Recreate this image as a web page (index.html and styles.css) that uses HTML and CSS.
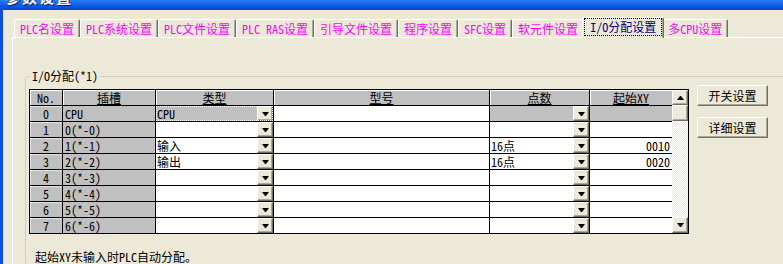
FILE: index.html
```html
<!DOCTYPE html>
<html lang="zh-CN">
<head>
    <meta charset="UTF-8">
    <title>参数设置</title>
    <link rel="stylesheet" href="styles.css">
</head>
<body>
    <div class="titlebar"><span class="title">参数设置</span></div>
    <div class="window">
        <div class="tabs">
            <div class="tab">PLC名设置</div>
            <div class="tab">PLC系统设置</div>
            <div class="tab">PLC文件设置</div>
            <div class="tab">PLC RAS设置</div>
            <div class="tab">引导文件设置</div>
            <div class="tab">程序设置</div>
            <div class="tab">SFC设置</div>
            <div class="tab">软元件设置</div>
            <div class="tab active"><span class="focus">I/O分配设置</span></div>
            <div class="tab">多CPU设置</div>
        </div>

        <div class="panel">
            <fieldset class="group">
                <legend>I/O分配(*1)</legend>
                <div class="io-row">
                    <div class="table-box">
                        <div class="grid">
                            <!-- header -->
                            <div class="c hd plain">No.</div>
                            <div class="c hd">插槽</div>
                            <div class="c hd">类型</div>
                            <div class="c hd">型号</div>
                            <div class="c hd">点数</div>
                            <div class="c hd">起始XY</div>

                            <div class="c no">0</div>
                            <div class="c slot">CPU</div>
                            <div class="c combo gray sel"><span>CPU</span><i class="drop"></i></div>
                            <div class="c"></div>
                            <div class="c combo gray"><span></span><i class="drop"></i></div>
                            <div class="c gray"></div>

                            <div class="c no">1</div>
                            <div class="c slot">0(*-0)</div>
                            <div class="c combo"><span></span><i class="drop"></i></div>
                            <div class="c"></div>
                            <div class="c combo"><span></span><i class="drop"></i></div>
                            <div class="c num"></div>

                            <div class="c no">2</div>
                            <div class="c slot">1(*-1)</div>
                            <div class="c combo"><span>输入</span><i class="drop"></i></div>
                            <div class="c"></div>
                            <div class="c combo"><span>16点</span><i class="drop"></i></div>
                            <div class="c num">0010</div>

                            <div class="c no">3</div>
                            <div class="c slot">2(*-2)</div>
                            <div class="c combo"><span>输出</span><i class="drop"></i></div>
                            <div class="c"></div>
                            <div class="c combo"><span>16点</span><i class="drop"></i></div>
                            <div class="c num">0020</div>

                            <div class="c no">4</div>
                            <div class="c slot">3(*-3)</div>
                            <div class="c combo"><span></span><i class="drop"></i></div>
                            <div class="c"></div>
                            <div class="c combo"><span></span><i class="drop"></i></div>
                            <div class="c num"></div>

                            <div class="c no">5</div>
                            <div class="c slot">4(*-4)</div>
                            <div class="c combo"><span></span><i class="drop"></i></div>
                            <div class="c"></div>
                            <div class="c combo"><span></span><i class="drop"></i></div>
                            <div class="c num"></div>

                            <div class="c no">6</div>
                            <div class="c slot">5(*-5)</div>
                            <div class="c combo"><span></span><i class="drop"></i></div>
                            <div class="c"></div>
                            <div class="c combo"><span></span><i class="drop"></i></div>
                            <div class="c num"></div>

                            <div class="c no">7</div>
                            <div class="c slot">6(*-6)</div>
                            <div class="c combo"><span></span><i class="drop"></i></div>
                            <div class="c"></div>
                            <div class="c combo"><span></span><i class="drop"></i></div>
                            <div class="c num"></div>
                        </div>
                        <div class="vscroll">
                            <div class="sb up"></div>
                            <div class="sb thumb"></div>
                            <div class="sb-track"></div>
                            <div class="sb down"></div>
                        </div>
                    </div>
                    <div class="side">
                        <button class="btn">开关设置</button>
                        <button class="btn">详细设置</button>
                    </div>
                </div>
                <p class="note">起始XY未输入时PLC自动分配。</p>
            </fieldset>
        </div>
    </div>
</body>
</html>
```

FILE: styles.css
```css
body {
    margin: 0;
    width: 783px;
    height: 264px;
    overflow: hidden;
    background: #ece9d8;
    color: #000;
    font-family: "Noto Sans Mono CJK SC", "Noto Sans CJK SC", "Liberation Mono", monospace;
    font-size: 12px;
}
.titlebar {
    height: 10px;
    overflow: hidden;
    padding-left: 5px;
    background: linear-gradient(#2a7bf6, #0c58e6 60%, #0848d4);
}
.title {
    display: block;
    margin-top: -11px;
    color: #fff;
    font: bold 15px/15px "Noto Sans CJK SC", sans-serif;
    letter-spacing: 2px;
    text-shadow: 1px 1px #0a1e6e;
}
.window {
    height: 254px;
    display: flex;
    flex-direction: column;
    border-left: 3px solid #0a50dc;
    padding-left: 9px;
}
.tabs {
    height: 27px;
    flex: none;
    display: flex;
    align-items: flex-end;
    padding-left: 2px;
}
.tab {
    height: 18px;
    box-sizing: border-box;
    padding: 0 5px;
    border-top: 1px solid #fff;
    border-left: 1px solid #fff;
    border-right: 1px solid #716f64;
    border-radius: 2px 2px 0 0;
    box-shadow: inset -1px 0 #aca899;
    color: #f0f;
    line-height: 17px;
    white-space: nowrap;
}
.tab.active {
    position: relative;
    height: 21px;
    margin: 0 -2px -1px;
    padding: 0 1px;
    background: #ece9d8;
    color: #000080;
}
.focus {
    display: block;
    border: 1px dotted #000;
    padding: 0 5px;
    line-height: 16px;
}
.panel {
    flex: 1;
    border-top: 1px solid #fff;
    border-left: 1px solid #fff;
    padding-left: 12px;
}
.group {
    width: 780px;
    min-width: 0;
    margin: 31px 0 0;
    padding: 2px 0 0 3px;
    border: 1px solid #d0d0bf;
    border-radius: 3px;
}
.group legend {
    margin-left: 1px;
    padding: 0 2px;
    line-height: 14px;
}
.io-row {
    display: flex;
    align-items: flex-start;
}
.table-box {
    margin-top: 4px;
    display: flex;
    border: 1px solid #000;
}
.grid {
    display: grid;
    grid-template-columns: 32px 92px 117px 215px 99px 82px;
    grid-auto-rows: 15px;
    gap: 1px;
    background: #000;
}
.c {
    background: #fff;
    line-height: 15px;
    white-space: nowrap;
    overflow: hidden;
}
.hd {
    background: #c0c0c0;
    text-align: center;
    text-decoration: underline;
    box-shadow: inset 1px 1px #fff;
}
.hd.plain {
    text-decoration: none;
}
.no {
    background: #c0c0c0;
    text-align: center;
    box-shadow: inset 1px 1px #e4e4e4;
}
.slot {
    background: #c0c0c0;
    padding-left: 2px;
}
.gray {
    background: #c0c0c0;
}
.num {
    text-align: right;
    padding-right: 2px;
}
.combo {
    display: flex;
}
.combo span {
    flex: 1;
    padding-left: 1px;
}
.sel {
    outline: 1px dotted #fff;
    outline-offset: -1px;
}
.drop, .sb {
    flex: none;
    width: 16px;
    height: 15px;
    box-sizing: border-box;
    display: flex;
    align-items: center;
    justify-content: center;
    background: #ece9d8;
    border: 1px solid;
    border-color: #fff #716f64 #716f64 #fff;
    box-shadow: inset -1px -1px #aca899;
}
.drop::after, .sb.down::after {
    content: "";
    width: 1px;
    border-top: 4px solid #000;
    border-left: 3px solid transparent;
    border-right: 3px solid transparent;
}
.sb.up::after {
    content: "";
    width: 1px;
    border-bottom: 4px solid #000;
    border-left: 3px solid transparent;
    border-right: 3px solid transparent;
}
.vscroll {
    width: 16px;
    display: flex;
    flex-direction: column;
    background-color: #fff;
    background-image: conic-gradient(#ece9d8 25%, #fff 0 50%, #ece9d8 0 75%, #fff 0);
    background-size: 2px 2px;
}
.sb.thumb, .sb.down {
    height: 16px;
}
.sb-track {
    flex: 1;
}
.side {
    margin-left: 8px;
    display: flex;
    flex-direction: column;
    gap: 11px;
}
.btn {
    width: 71px;
    height: 21px;
    padding: 0;
    font: inherit;
    color: #000;
    background: #ece9d8;
    border: 1px solid;
    border-color: #fff #716f64 #716f64 #fff;
    box-shadow: inset -1px -1px #aca899;
}
.note {
    margin: 16px 0 0 6px;
    line-height: 14px;
}
```
